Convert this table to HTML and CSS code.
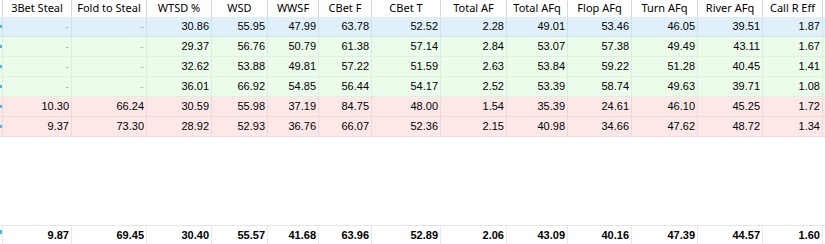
FILE: index.html
```html
<!DOCTYPE html>
<html>
<head>
<meta charset="utf-8">
<link rel="stylesheet" href="styles.css">
</head>
<body>
<div class="grid">
  <div class="row head">
    <div class="c c0"></div><div class="c">3Bet Steal</div><div class="c">Fold to Steal</div><div class="c">WTSD %</div><div class="c">WSD</div><div class="c">WWSF</div><div class="c">CBet F</div><div class="c">CBet T</div><div class="c">Total AF</div><div class="c">Total AFq</div><div class="c">Flop AFq</div><div class="c">Turn AFq</div><div class="c">River AFq</div><div class="c">Call R Eff</div>
  </div>
  <div class="row blue">
    <div class="c c0"><span class="mark"></span></div><div class="c dash">-</div><div class="c dash">-</div><div class="c">30.86</div><div class="c">55.95</div><div class="c">47.99</div><div class="c">63.78</div><div class="c">52.52</div><div class="c">2.28</div><div class="c">49.01</div><div class="c">53.46</div><div class="c">46.05</div><div class="c">39.51</div><div class="c">1.87</div>
  </div>
  <div class="row green">
    <div class="c c0"><span class="mark"></span></div><div class="c dash">-</div><div class="c dash">-</div><div class="c">29.37</div><div class="c">56.76</div><div class="c">50.79</div><div class="c">61.38</div><div class="c">57.14</div><div class="c">2.84</div><div class="c">53.07</div><div class="c">57.38</div><div class="c">49.49</div><div class="c">43.11</div><div class="c">1.67</div>
  </div>
  <div class="row green">
    <div class="c c0"><span class="mark"></span></div><div class="c dash">-</div><div class="c dash">-</div><div class="c">32.62</div><div class="c">53.88</div><div class="c">49.81</div><div class="c">57.22</div><div class="c">51.59</div><div class="c">2.63</div><div class="c">53.84</div><div class="c">59.22</div><div class="c">51.28</div><div class="c">40.45</div><div class="c">1.41</div>
  </div>
  <div class="row green">
    <div class="c c0"><span class="mark"></span></div><div class="c dash">-</div><div class="c dash">-</div><div class="c">36.01</div><div class="c">66.92</div><div class="c">54.85</div><div class="c">56.44</div><div class="c">54.17</div><div class="c">2.52</div><div class="c">53.39</div><div class="c">58.74</div><div class="c">49.63</div><div class="c">39.71</div><div class="c">1.08</div>
  </div>
  <div class="row pink">
    <div class="c c0"><span class="mark"></span></div><div class="c">10.30</div><div class="c">66.24</div><div class="c">30.59</div><div class="c">55.98</div><div class="c">37.19</div><div class="c">84.75</div><div class="c">48.00</div><div class="c">1.54</div><div class="c">35.39</div><div class="c">24.61</div><div class="c">46.10</div><div class="c">45.25</div><div class="c">1.72</div>
  </div>
  <div class="row pink">
    <div class="c c0"><span class="mark"></span></div><div class="c">9.37</div><div class="c">73.30</div><div class="c">28.92</div><div class="c">52.93</div><div class="c">36.76</div><div class="c">66.07</div><div class="c">52.36</div><div class="c">2.15</div><div class="c">40.98</div><div class="c">34.66</div><div class="c">47.62</div><div class="c">48.72</div><div class="c">1.34</div>
  </div>
  <div class="spacer"></div>
  <div class="row total">
    <div class="c c0"><span class="mark"></span></div><div class="c">9.87</div><div class="c">69.45</div><div class="c">30.40</div><div class="c">55.57</div><div class="c">41.68</div><div class="c">63.96</div><div class="c">52.89</div><div class="c">2.06</div><div class="c">43.09</div><div class="c">40.16</div><div class="c">47.39</div><div class="c">44.57</div><div class="c">1.60</div>
  </div>
</div>
</body>
</html>
```
FILE: styles.css
```css
html, body {
  margin: 0;
  padding: 0;
  background: #ffffff;
}
.grid {
  width: 825px;
  height: 244px;
  overflow: hidden;
  display: flex;
  flex-direction: column;
  font-family: "Liberation Sans", Arial, sans-serif;
  font-size: 11px;
  color: #000;
}
.row {
  display: grid;
  grid-template-columns: 3px 69px 75px 65px 56px 51px 53px 69px 66px 61px 64px 66px 65px 60px;
  height: 20px;
  flex: none;
  box-sizing: border-box;
  border-bottom: 1px solid rgba(0,0,0,0.05);
}
.c {
  box-sizing: border-box;
  border-right: 1px solid rgba(0,0,0,0.06);
  padding-right: 2px;
  text-align: right;
  line-height: 19px;
  white-space: nowrap;
  overflow: hidden;
}
.c0 {
  padding: 0;
  position: relative;
}
.mark {
  position: absolute;
  left: 0;
  top: 8px;
  width: 2px;
  height: 3px;
  background: #49b8e8;
}
.head {
  height: 17px;
  background: #fff;
  border-bottom: none;
  font-family: "Noto Sans", sans-serif;
  font-size: 11px;
}
.head .c {
  text-align: center;
  padding: 0;
  line-height: 15px;
  border-right: 1px solid #d6d6d6;
  color: #000;
}
.head .c0 {
  border-right: 1px solid #d6d6d6;
}
.blue { background: #dff0fb; }
.green { background: #ecfcea; }
.pink { background: #fde7e7; }
.dash { color: #b4b4b4; }
.spacer { flex: 1; }
.total {
  height: 19px;
  border-top: 1px solid #e6e6e6;
  border-bottom: none;
  font-weight: bold;
}
.total .c { border-right-color: #e8e8e8; line-height: 18px; }
.total .mark { top: 4px; height: 4px; }
```
